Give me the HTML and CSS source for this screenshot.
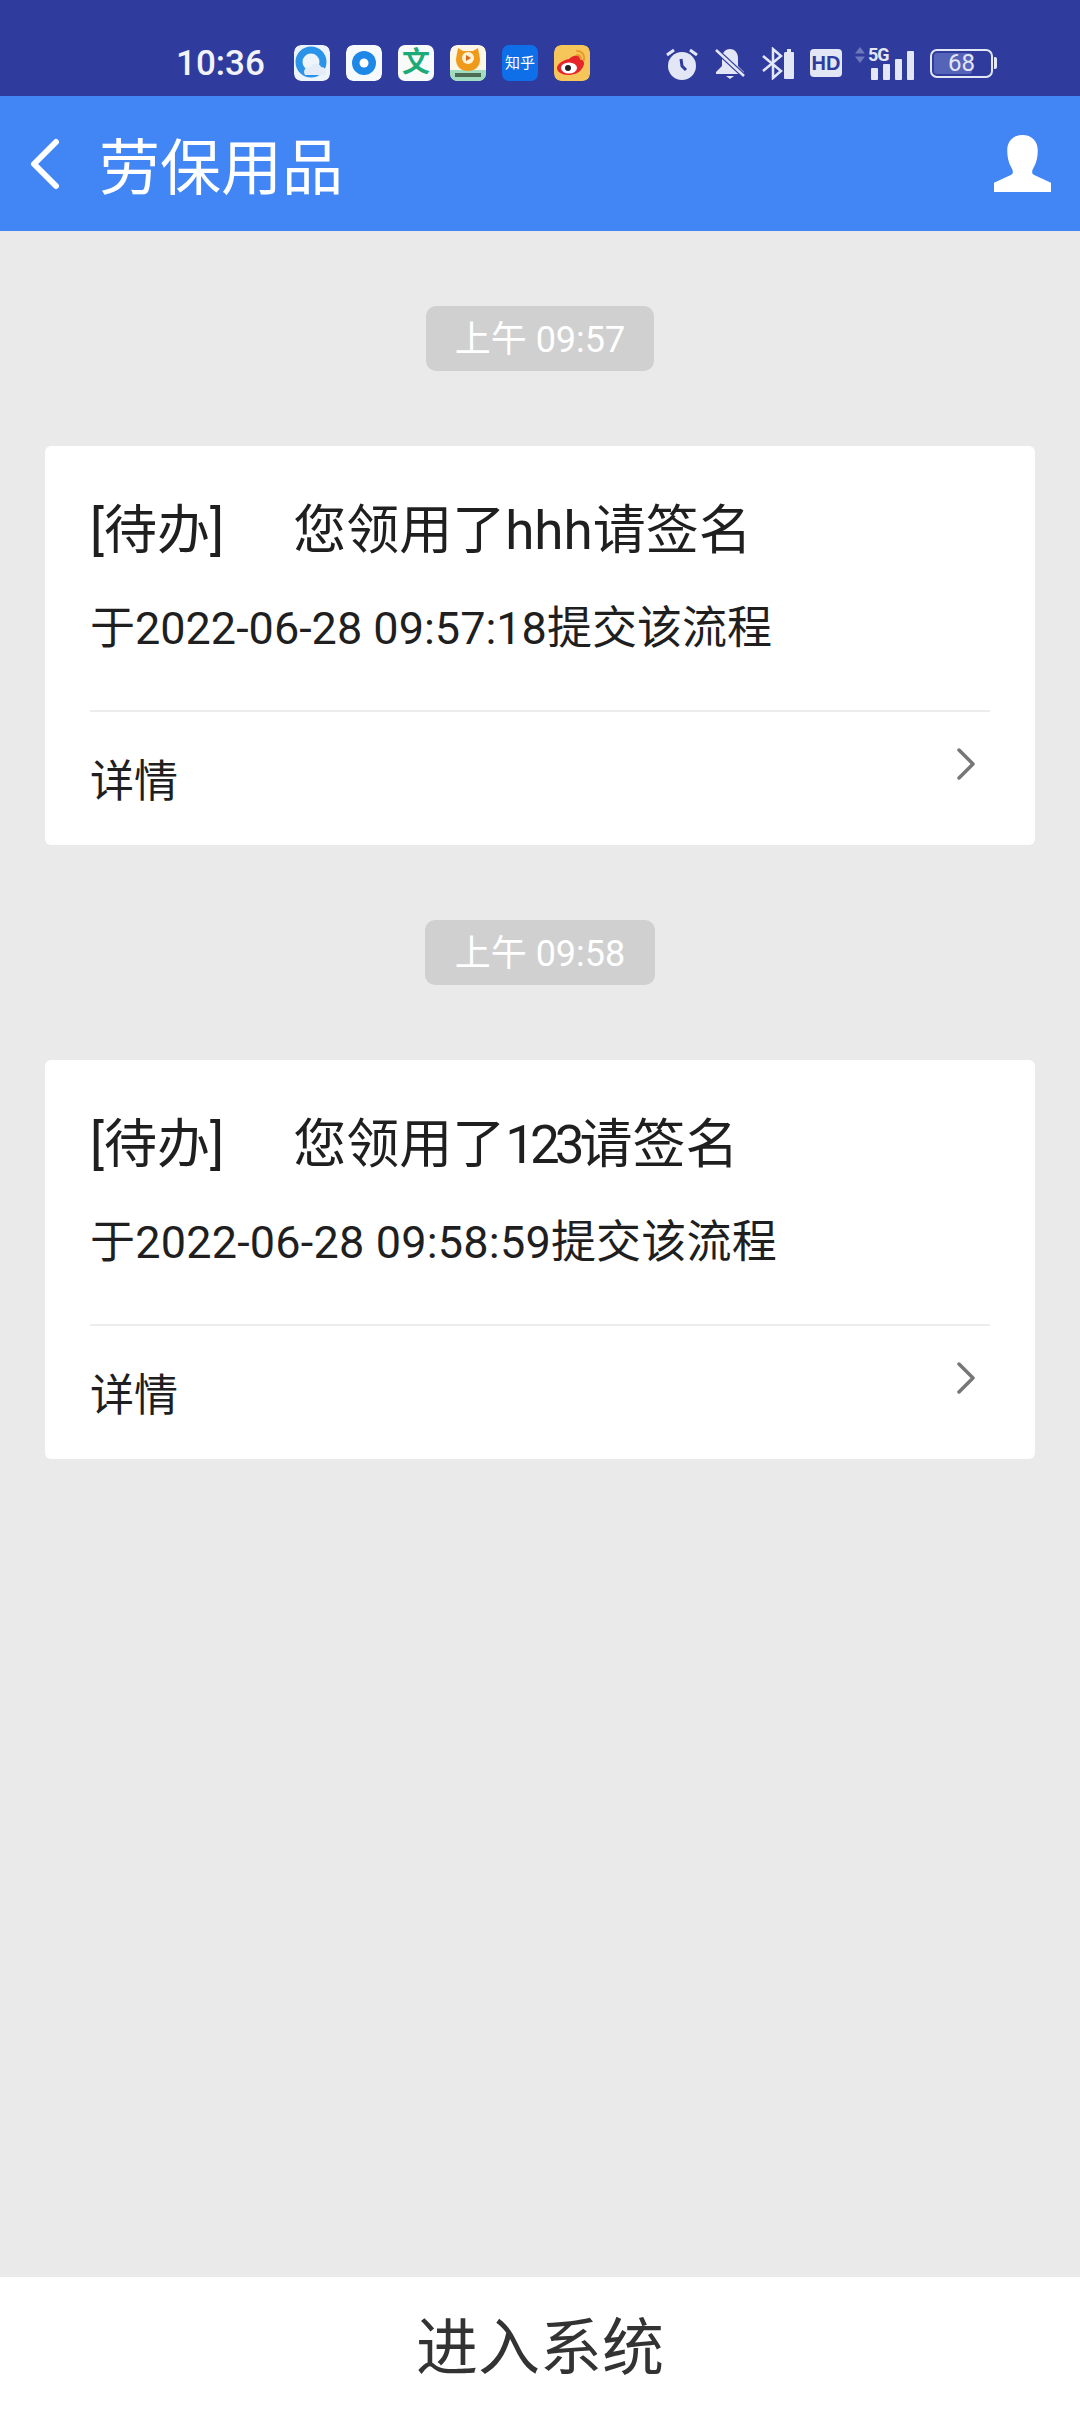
FILE: index.html
```html
<!DOCTYPE html>
<html>
<head>
    <meta charset="utf-8">
    <link rel="stylesheet" href="styles.css">
</head>
<body>
    <div class="statusbar">
        <span class="clock">10:36</span>
        <div class="apps">
            <svg class="app" viewBox="0 0 36 36">
                <rect width="36" height="36" rx="7" fill="#eef4fb"/>
                <circle cx="17" cy="17" r="12" fill="none" stroke="#2b93e8" stroke-width="7"/>
                <path d="M11 30c-3-5 2-9 6-8 2-5 9-4 10 0 4 0 6 3 5 8z" fill="#e4edf7"/>
            </svg>
            <svg class="app" viewBox="0 0 36 36">
                <rect width="36" height="36" rx="7" fill="#f7fafd"/>
                <circle cx="18" cy="18" r="12" fill="#1e88e8"/>
                <circle cx="18" cy="18" r="4.5" fill="#fff"/>
            </svg>
            <div class="app app-wen">文</div>
            <svg class="app" viewBox="0 0 36 36">
                <rect width="36" height="36" rx="7" fill="#fbf6e6"/>
                <path d="M0 25h36v4a7 7 0 0 1-7 7H7a7 7 0 0 1-7-7z" fill="#9fdcc0"/>
                <path d="M8 3l5 3h10l5-3 2 11c0 8-5 12-12 12S6 22 6 14z" fill="#f09a1c"/>
                <circle cx="18" cy="13" r="6" fill="#fff3d6"/>
                <path d="M16 10l5 3-5 3z" fill="#d9661a"/>
                <rect x="5" y="28" width="26" height="4" fill="#4d6b55"/>
            </svg>
            <div class="app app-zhihu">知乎</div>
            <svg class="app" viewBox="0 0 36 36">
                <rect width="36" height="36" rx="7" fill="#f6c65a"/>
                <path d="M15 14c6-5 11-4 11 0 4 1 5 4 3 8-3 6-9 8-15 8-6 0-11-3-11-7 0-3 5-8 12-9z" fill="#e6252b"/>
                <ellipse cx="15" cy="23" rx="8" ry="5.5" fill="#fff"/>
                <circle cx="14" cy="23" r="3" fill="#222"/>
                <path d="M23 6c5 0 8 4 7 9M23 10c3 0 4 2 4 4" fill="none" stroke="#e89a2c" stroke-width="2" stroke-linecap="round"/>
            </svg>
        </div>
        <div class="indicators">
            <svg class="ind-alarm" viewBox="0 0 32 33">
                <circle cx="16" cy="19" r="14" fill="#e3e6f5"/>
                <path d="M1 8l7-5M31 8l-7-5" stroke="#e3e6f5" stroke-width="3" fill="none"/>
                <path d="M15 12l1 7 4 4" stroke="#2f3c9e" stroke-width="3" fill="none"/>
            </svg>
            <svg class="ind-bell" viewBox="0 0 30 33">
                <path d="M15 2c5 0 8 4 8 9v8l6 6v2H1v-2l6-6v-8c0-5 3-9 8-9z" fill="#e3e6f5"/>
                <path d="M11 29h8l-4 3z" fill="#e3e6f5"/>
                <path d="M1 3l28 26" stroke="#2f3c9e" stroke-width="5"/>
                <path d="M1 3l28 26" stroke="#e3e6f5" stroke-width="2.5"/>
            </svg>
            <svg class="ind-bt" viewBox="0 0 34 33">
                <path d="M2 9l18 15-8 7V2l8 7L2 24" fill="none" stroke="#e3e6f5" stroke-width="2.5"/>
                <path d="M24 5h2V2h4v3h2a1 1 0 0 1 1 1v25a1 1 0 0 1-1 1h-8a1 1 0 0 1-1-1V6z" fill="#e3e6f5"/>
            </svg>
            <div class="ind-hd">HD</div>
            <div class="ind-signal">
                <svg class="ind-arrows" viewBox="0 0 10 16">
                    <path d="M5 0l5 6.500H0zM5 16L0 9.500h10z" fill="#6d78bd"/>
                </svg>
                <span class="ind-5g">5G</span>
                <div class="bars">
                    <i class="bar bar-1"></i>
                    <i class="bar bar-2"></i>
                    <i class="bar bar-3"></i>
                    <i class="bar bar-4"></i>
                </div>
            </div>
            <div class="ind-battery">
                <div class="battery-body">
                    <div class="battery-fill"></div>
                    <span class="battery-num">68</span>
                </div>
                <i class="battery-tip"></i>
            </div>
        </div>
    </div>

    <div class="header">
        <svg class="back" viewBox="0 0 32 52">
            <path d="M27 4L5 26l22 22" fill="none" stroke="#fff" stroke-width="6" stroke-linecap="round" stroke-linejoin="round"/>
        </svg>
        <h1 class="title">劳保用品</h1>
        <svg class="user" viewBox="0 0 56 56">
            <path d="M28 0c9 0 15 6 15 15 0 6-1 12-4 17-2 3-2 6 0 7l17 8v9H0v-9l17-8c2-1 2-4 0-7-3-5-4-11-4-17C13 6 19 0 28 0z" fill="#fff"/>
        </svg>
    </div>

    <div class="main">
        <div class="msg">
            <div class="stamp">上午 09:57</div>
            <div class="card">
                <div class="card-title">
                    <span class="tag">[待办]</span>
                    <span>您领用了hhh请签名</span>
                </div>
                <div class="card-date">于2022-06-28 09:57:18提交该流程</div>
                <div class="card-foot">
                    <span>详情</span>
                    <svg class="more" viewBox="0 0 18 32">
                        <path d="M2 2l14 14L2 30" fill="none" stroke="#777" stroke-width="3.500" stroke-linecap="round" stroke-linejoin="round"/>
                    </svg>
                </div>
            </div>
        </div>
        <div class="msg">
            <div class="stamp stamp-wide">上午 09:58</div>
            <div class="card">
                <div class="card-title">
                    <span class="tag">[待办]</span>
                    <span>您领用了<span class="digits-tight">123</span>请签名</span>
                </div>
                <div class="card-date card-date-wide">于2022-06-28 09:58:59提交该流程</div>
                <div class="card-foot">
                    <span>详情</span>
                    <svg class="more" viewBox="0 0 18 32">
                        <path d="M2 2l14 14L2 30" fill="none" stroke="#777" stroke-width="3.500" stroke-linecap="round" stroke-linejoin="round"/>
                    </svg>
                </div>
            </div>
        </div>
    </div>

    <div class="enter">进入系统</div>
</body>
</html>
```

FILE: styles.css
```css
html,
body {
    height: 100%;
}
body {
    margin: 0;
    display: flex;
    flex-direction: column;
    background-color: #eaeaea;
    color: #1f1f1f;
    font-family: Roboto, "Noto Sans CJK SC", sans-serif;
}

/* status bar */
.statusbar {
    height: 96px;
    flex: none;
    display: flex;
    align-items: center;
    padding: 30px 0 0 176px;
    box-sizing: border-box;
    background-color: #2f3c9e;
    color: #f2f3fa;
}
.clock {
    width: 118px;
    font-size: 35px;
    font-weight: 500;
}
.apps {
    display: flex;
    gap: 16px;
}
.app {
    width: 36px;
    height: 36px;
    border-radius: 7px;
    display: block;
}
.app-wen {
    background-color: #f9fbfa;
    color: #1cab78;
    font-size: 28px;
    font-weight: 700;
    line-height: 36px;
    text-align: center;
}
.app-zhihu {
    background-color: #0f6fe8;
    color: #fff;
    font-size: 15px;
    line-height: 36px;
    text-align: center;
}
.indicators {
    display: flex;
    align-items: center;
    margin-left: 76px;
}
.ind-alarm {
    width: 32px;
    height: 33px;
}
.ind-bell {
    width: 30px;
    height: 33px;
    margin-left: 17px;
}
.ind-bt {
    width: 34px;
    height: 33px;
    margin-left: 16px;
}
.ind-hd {
    width: 32px;
    height: 28px;
    margin-left: 15px;
    border-radius: 4px;
    background-color: #e3e6f5;
    color: #2f3c9e;
    font-family: "Liberation Sans", sans-serif;
    font-size: 20px;
    font-weight: 700;
    line-height: 28px;
    text-align: center;
}
.ind-signal {
    position: relative;
    width: 59px;
    height: 33px;
    margin-left: 13px;
}
.ind-arrows {
    position: absolute;
    left: 0;
    top: 0;
    width: 10px;
    height: 16px;
}
.ind-5g {
    position: absolute;
    left: 13px;
    top: -2px;
    color: #e3e6f5;
    font-size: 18px;
    font-weight: 700;
    line-height: 20px;
    letter-spacing: -1px;
}
.bars {
    position: absolute;
    right: 0;
    bottom: 0;
    display: flex;
    align-items: flex-end;
    gap: 5px;
}
.bar {
    width: 7px;
    background-color: #e3e6f5;
    border-radius: 1px;
}
.bar-1 {
    height: 12px;
}
.bar-2 {
    height: 16px;
}
.bar-3 {
    height: 21px;
}
.bar-4 {
    height: 29px;
}
.ind-battery {
    display: flex;
    align-items: center;
    margin-left: 16px;
}
.battery-body {
    position: relative;
    width: 63px;
    height: 29px;
    border: 2px solid #e3e6f5;
    border-radius: 7px;
    box-sizing: border-box;
}
.battery-fill {
    position: absolute;
    left: 2px;
    top: 2px;
    bottom: 2px;
    width: 38px;
    border-radius: 3px;
    background-color: #5563b8;
}
.battery-num {
    position: absolute;
    left: 0;
    right: 0;
    top: 0;
    color: #e3e6f5;
    font-size: 24px;
    line-height: 25px;
    text-align: center;
}
.battery-tip {
    width: 3px;
    height: 12px;
    margin-left: 1px;
    background-color: #e3e6f5;
    border-radius: 0 2px 2px 0;
}

/* header */
.header {
    height: 135px;
    flex: none;
    display: flex;
    align-items: center;
    padding: 0 29px;
    box-sizing: border-box;
    background-color: #4285f4;
    color: #fff;
}
.back {
    width: 32px;
    height: 52px;
}
.title {
    flex: 1;
    margin: 0 0 0 38px;
    font-size: 61px;
    font-weight: 400;
}
.user {
    width: 57px;
    height: 57px;
}

/* messages */
.main {
    flex: 1;
}
.msg {
    display: flex;
    flex-direction: column;
    align-items: center;
    padding: 75px 45px 0;
}
.stamp {
    width: 228px;
    height: 65px;
    border-radius: 10px;
    background-color: #d0d0d0;
    color: #fff;
    font-size: 36px;
    line-height: 69px;
    text-align: center;
}
.stamp-wide {
    width: 230px;
}
.card {
    align-self: stretch;
    height: 399px;
    margin-top: 75px;
    padding: 0 45px;
    box-sizing: border-box;
    border-radius: 6px;
    background-color: #fff;
}
.card-title {
    padding-top: 49px;
    font-size: 53px;
    line-height: 72px;
    white-space: nowrap;
}
.tag {
    display: inline-block;
    width: 190px;
}
.digits-tight {
    letter-spacing: -5px;
}
.card-date {
    height: 145px;
    padding-top: 32px;
    box-sizing: border-box;
    font-size: 45px;
    line-height: 60px;
    border-bottom: 2px solid #ececec;
    white-space: nowrap;
}
.card-date-wide {
    letter-spacing: 0.2px;
}
.card-foot {
    display: flex;
    justify-content: space-between;
    padding: 39px 15px 0 0;
    font-size: 44px;
    line-height: 62px;
}
.more {
    width: 18px;
    height: 32px;
    margin-top: -3px;
}

/* bottom button */
.enter {
    height: 135px;
    flex: none;
    padding-top: 8px;
    box-sizing: border-box;
    background-color: #fff;
    color: #333;
    font-size: 62px;
    line-height: 127px;
    text-align: center;
}
```
